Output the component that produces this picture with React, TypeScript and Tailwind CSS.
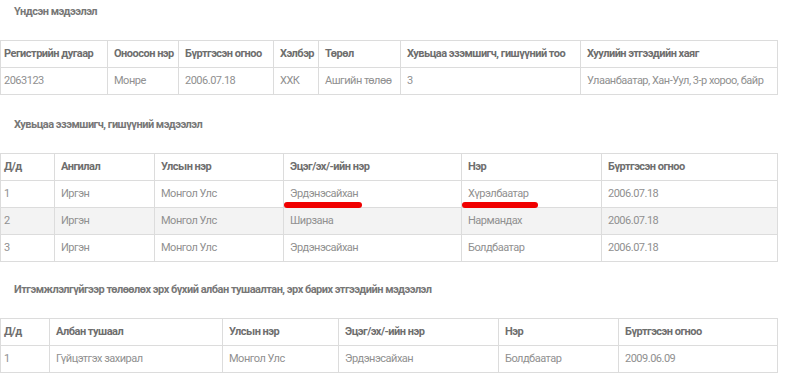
import React from 'react';

type Table = {
  cols: number[];
  head: string[];
  rows: string[][];
};

const font = { fontFamily: 'Roboto, "Liberation Sans", sans-serif' };

const basic: Table = {
  cols: [107, 71, 95, 45, 82, 180, 197],
  head: ['Регистрийн дугаар', 'Оноосон нэр', 'Бүртгэсэн огноо', 'Хэлбэр', 'Төрөл', 'Хувьцаа эзэмшигч, гишүүний тоо', 'Хуулийн этгээдийн хаяг'],
  rows: [['2063123', 'Монре', '2006.07.18', 'ХХК', 'Ашгийн төлөө', '3', 'Улаанбаатар, Хан-Уул, 3-р хороо, байр']],
};

const members: Table = {
  cols: [54, 100, 129, 178, 140, 176],
  head: ['Д/д', 'Ангилал', 'Улсын нэр', 'Эцэг/эх/-ийн нэр', 'Нэр', 'Бүртгэсэн огноо'],
  rows: [
    ['1', 'Иргэн', 'Монгол Улс', 'Эрдэнэсайхан', 'Хүрэлбаатар', '2006.07.18'],
    ['2', 'Иргэн', 'Монгол Улс', 'Ширзана', 'Нармандах', '2006.07.18'],
    ['3', 'Иргэн', 'Монгол Улс', 'Эрдэнэсайхан', 'Болдбаатар', '2006.07.18'],
  ],
};

const officials: Table = {
  cols: [49, 173, 116, 160, 120, 159],
  head: ['Д/д', 'Албан тушаал', 'Улсын нэр', 'Эцэг/эх/-ийн нэр', 'Нэр', 'Бүртгэсэн огноо'],
  rows: [['1', 'Гүйцэтгэх захирал', 'Монгол Улс', 'Эрдэнэсайхан', 'Болдбаатар', '2009.06.09']],
};

// red marker strokes drawn over the first member row
const marks: Record<string, number> = { '0-3': 78, '0-4': 76 };

const DataTable = ({ t, marked }: { t: Table; marked?: boolean }) => (
  <table className="table-fixed border-collapse w-[777px] text-[11px] tracking-[-0.5px]">
    <colgroup>
      {t.cols.map((w, i) => (
        <col key={i} style={{ width: w }} />
      ))}
    </colgroup>
    <thead>
      <tr>
        {t.head.map((h, i) => (
          <th
            key={i}
            className={`h-[27px] p-0 border border-[#dcdcdc] text-left font-bold text-[#6e6e6e] whitespace-nowrap overflow-hidden ${i === 0 ? 'pl-[3px]' : 'pl-[6px]'}`}
          >
            {h}
          </th>
        ))}
      </tr>
    </thead>
    <tbody>
      {t.rows.map((r, ri) => (
        <tr key={ri} className={ri % 2 === 1 ? 'bg-[#f3f3f3]' : ''}>
          {r.map((c, ci) => (
            <td
              key={ci}
              className={`relative h-[27px] p-0 border border-[#dcdcdc] text-[#909090] whitespace-nowrap ${ci === 0 ? 'pl-[3px]' : 'pl-[6px]'}`}
            >
              {c}
              {marked && marks[`${ri}-${ci}`] && (
                <span
                  className="absolute left-[0px] bottom-[-1px] h-[6px] rounded-full bg-[#f00000] z-10"
                  style={{ width: marks[`${ri}-${ci}`] }}
                />
              )}
            </td>
          ))}
        </tr>
      ))}
    </tbody>
  </table>
);

const Title = ({ children, className }: { children: React.ReactNode; className: string }) => (
  <div className={`pl-[14px] h-[14px] leading-[14px] text-[11px] tracking-[-0.5px] font-bold text-[#777] ${className}`}>
    {children}
  </div>
);

export default function App() {
  return (
    <div className="w-[787px] h-[379px] bg-white overflow-hidden" style={font}>
      <Title className="mt-[5px] mb-[21px]">Үндсэн мэдээлэл</Title>
      <DataTable t={basic} />
      <Title className="mt-[23px] mb-[21px]">Хувьцаа эзэмшигч, гишүүний мэдээлэл</Title>
      <DataTable t={members} marked />
      <Title className="mt-[21px] mb-[21px]">
        Итгэмжлэлгүйгээр төлөөлөх эрх бүхий албан тушаалтан, эрх барих этгээдийн мэдээлэл
      </Title>
      <DataTable t={officials} />
    </div>
  );
}
